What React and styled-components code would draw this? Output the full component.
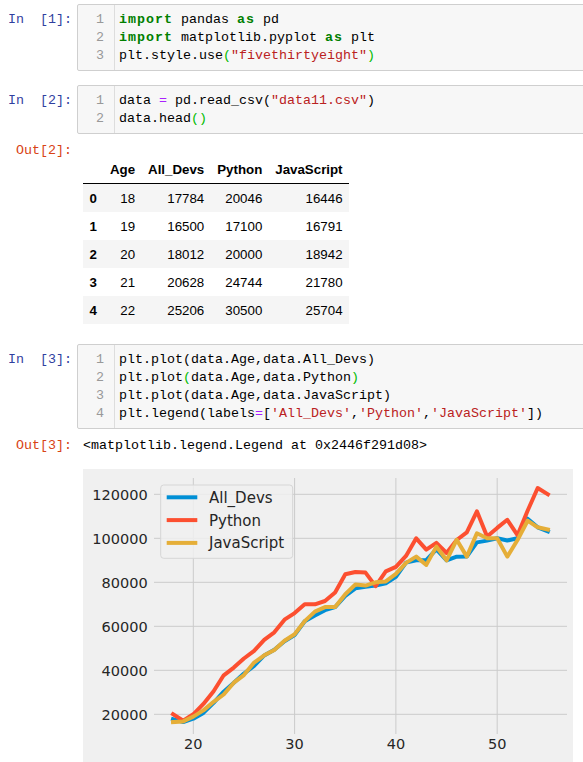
import React from 'react';
import styled, { createGlobalStyle } from 'styled-components';

const GlobalStyle = createGlobalStyle`
  html, body {
    margin: 0;
    padding: 0;
    background: #ffffff;
    overflow: hidden;
  }
`;

const mono = `"Liberation Mono", "DejaVu Sans Mono", monospace`;

const Notebook = styled.div`
  width: 640px;
  padding-top: 4px;
`;

const Cell = styled.div`
  display: flex;
  align-items: flex-start;
  margin-top: ${(p) => p.$gap || 0}px;
`;

const Prompt = styled.div`
  flex: 0 0 77px;
  box-sizing: border-box;
  padding-right: 5px;
  padding-top: ${(p) => (p.$out ? 0 : 7)}px;
  text-align: right;
  font-family: ${mono};
  font-size: 13.33px;
  line-height: 18px;
  white-space: pre;
  color: ${(p) => (p.$out ? '#D84315' : '#303F9F')};
`;

const InputArea = styled.div`
  flex: 1;
  display: flex;
  background: #f7f7f7;
  border: 1px solid #cfcfcf;
  border-radius: 2px;
  font-family: ${mono};
  font-size: 13.33px;
  line-height: 18px;
`;

const Gutter = styled.div`
  width: 37px;
  box-sizing: border-box;
  padding: 6px 10px 5px 0;
  border-right: 1px solid #dddddd;
  text-align: right;
  color: #999999;
`;

const Code = styled.div`
  padding: 6px 0 5px 4px;
  color: #000000;
  white-space: pre;
`;

const Tok = styled.span`
  color: ${(p) =>
    ({ kw: '#008000', str: '#BA2121', op: '#AA22FF', br: '#00bb00' }[p.$k] || '#000')};
  font-weight: ${(p) => (p.$k === 'kw' ? 700 : 400)};
  letter-spacing: ${(p) => (p.$k === 'kw' ? '1px' : '0')};
`;

const OutputContent = styled.div`
  padding-left: 6px;
`;

const OutText = styled.div`
  font-family: ${mono};
  font-size: 13.33px;
  line-height: 18px;
  white-space: pre;
  color: #000;
`;

const Frame = styled.table`
  margin-top: 13px;
  border-collapse: collapse;
  border-spacing: 0;
  font-family: "Liberation Sans", Arial, sans-serif;
  font-size: 13.3px;
  line-height: 15px;
  color: #000;
`;

const HeadRow = styled.tr`
  border-bottom: 1px solid #000;
`;

const Row = styled.tr`
  background: ${(p) => (p.$odd ? '#ffffff' : '#f5f5f5')};
`;

const Th = styled.th`
  padding: 6.5px;
  text-align: right;
  font-weight: 700;
`;

const Td = styled.td`
  padding: 6.5px;
  text-align: right;
`;

const Chart = styled.svg`
  display: block;
  margin-top: 14px;
  font-family: "DejaVu Sans", sans-serif;
`;

const Line = ({ children }) => <div>{children}</div>;

const CodeCell = ({ n, lines, gap }) => (
  <Cell $gap={gap}>
    <Prompt>{`In\u00a0\u00a0[${n}]:`}</Prompt>
    <InputArea>
      <Gutter>
        {lines.map((_, i) => (
          <div key={i}>{i + 1}</div>
        ))}
      </Gutter>
      <Code>
        {lines.map((l, i) => (
          <Line key={i}>{l}</Line>
        ))}
      </Code>
    </InputArea>
  </Cell>
);

const cell1 = [
  <><Tok $k="kw">import</Tok> pandas <Tok $k="kw">as</Tok> pd</>,
  <><Tok $k="kw">import</Tok> matplotlib.pyplot <Tok $k="kw">as</Tok> plt</>,
  <>plt.style.use<Tok $k="br">(</Tok><Tok $k="str">"fivethirtyeight"</Tok><Tok $k="br">)</Tok></>,
];

const cell2 = [
  <>data <Tok $k="op">=</Tok> pd.read_csv(<Tok $k="str">"data11.csv"</Tok>)</>,
  <>data.head<Tok $k="br">()</Tok></>,
];

const cell3 = [
  <>plt.plot(data.Age,data.All_Devs)</>,
  <>plt.plot<Tok $k="br">(</Tok>data.Age,data.Python<Tok $k="br">)</Tok></>,
  <>plt.plot(data.Age,data.JavaScript)</>,
  <>plt.legend(labels<Tok $k="op">=</Tok>[<Tok $k="str">'All_Devs'</Tok>,<Tok $k="str">'Python'</Tok>,<Tok $k="str">'JavaScript'</Tok>])</>,
];

const tableRows = [
  [18, 17784, 20046, 16446],
  [19, 16500, 17100, 16791],
  [20, 18012, 20000, 18942],
  [21, 20628, 24744, 21780],
  [22, 25206, 30500, 25704],
];

const allDevs = [17784, 16500, 18012, 20628, 25206, 30252, 34368, 38496, 42000, 46752, 49320, 53200, 56000, 62316, 64928, 67317, 68748, 73752, 77232, 78000, 78508, 79536, 82488, 88935, 90000, 90056, 95000, 90000, 91633, 91660, 98150, 98964, 100000, 98988, 100000, 108923, 105000, 103117];
const python = [20046, 17100, 20000, 24744, 30500, 37732, 41247, 45372, 48876, 53850, 57287, 63016, 65998, 70003, 70000, 71496, 75370, 83640, 84666, 84392, 78254, 85000, 87038, 91991, 100000, 94796, 97962, 93302, 99240, 102736, 112285, 100771, 104708, 108423, 101407, 112542, 122870, 120000];
const javascript = [16446, 16791, 18942, 21780, 25704, 29000, 34372, 37810, 43515, 46823, 49293, 53437, 56373, 62375, 66674, 68745, 68746, 74583, 79000, 78508, 79996, 80403, 83820, 88833, 91660, 87892, 96243, 90000, 99313, 91660, 102264, 100000, 100000, 91660, 99240, 108000, 105000, 104000];

const X = (a) => 110.3 + (a - 20) * 10.13;
const Y = (v) => 245.3 - (v - 20000) * 0.0022;
const pts = (arr) => arr.map((v, i) => `${X(18 + i).toFixed(1)},${Y(v).toFixed(1)}`).join(' ');

const series = [
  { name: 'All_Devs', color: '#008fd5', data: allDevs },
  { name: 'Python', color: '#fc4f30', data: python },
  { name: 'JavaScript', color: '#e5ae38', data: javascript },
];

const PlotChart = () => (
  <Chart width="490" height="300" viewBox="0 0 490 300">
    <rect x="0" y="0" width="490" height="300" fill="#f0f0f0" />
    {[20, 30, 40, 50].map((a) => (
      <line key={a} x1={X(a)} x2={X(a)} y1="9" y2="265" stroke="#cbcbcb" strokeWidth="1" />
    ))}
    {[20000, 40000, 60000, 80000, 100000, 120000].map((v) => (
      <line key={v} x1="71" x2="484" y1={Y(v)} y2={Y(v)} stroke="#cbcbcb" strokeWidth="1" />
    ))}
    {series.map((s) => (
      <polyline
        key={s.name}
        points={pts(s.data)}
        fill="none"
        stroke={s.color}
        strokeWidth="4"
        strokeLinejoin="round"
        strokeLinecap="square"
      />
    ))}
    {[20000, 40000, 60000, 80000, 100000, 120000].map((v) => (
      <text key={v} x="64.7" y={Y(v) + 5.3} textAnchor="end" fontSize="14.5" fill="#262626">
        {v}
      </text>
    ))}
    {[20, 30, 40, 50].map((a) => (
      <text key={a} x={X(a)} y="279.6" textAnchor="middle" fontSize="14.5" fill="#262626">
        {a}
      </text>
    ))}
    <rect x="77.7" y="16" width="132" height="73.3" rx="3" fill="#f0f0f0" fillOpacity="0.85" stroke="#d6d6d6" strokeWidth="1" />
    {series.map((s, i) => {
      const cy = 28.3 + i * 22.8;
      return (
        <g key={s.name}>
          <line x1="83.7" x2="114.3" y1={cy} y2={cy} stroke={s.color} strokeWidth="4" />
          <text x="126" y={cy + 5.4} fontSize="15" fill="#262626">
            {s.name}
          </text>
        </g>
      );
    })}
  </Chart>
);

export default function App() {
  return (
    <>
      <GlobalStyle />
      <Notebook>
        <CodeCell n={1} lines={cell1} />
        <CodeCell n={2} lines={cell2} gap={14} />
        <Cell $gap={8}>
          <Prompt $out>Out[2]:</Prompt>
          <OutputContent>
            <Frame>
              <thead>
                <HeadRow>
                  <Th></Th>
                  <Th>Age</Th>
                  <Th>All_Devs</Th>
                  <Th>Python</Th>
                  <Th>JavaScript</Th>
                </HeadRow>
              </thead>
              <tbody>
                {tableRows.map((r, i) => (
                  <Row key={i} $odd={i % 2 === 1}>
                    <Th>{i}</Th>
                    {r.map((v, j) => (
                      <Td key={j}>{v}</Td>
                    ))}
                  </Row>
                ))}
              </tbody>
            </Frame>
          </OutputContent>
        </Cell>
        <CodeCell n={3} lines={cell3} gap={20} />
        <Cell $gap={8}>
          <Prompt $out>Out[3]:</Prompt>
          <OutputContent>
            <OutText>{'<matplotlib.legend.Legend at 0x2446f291d08>'}</OutText>
            <PlotChart />
          </OutputContent>
        </Cell>
      </Notebook>
    </>
  );
}
